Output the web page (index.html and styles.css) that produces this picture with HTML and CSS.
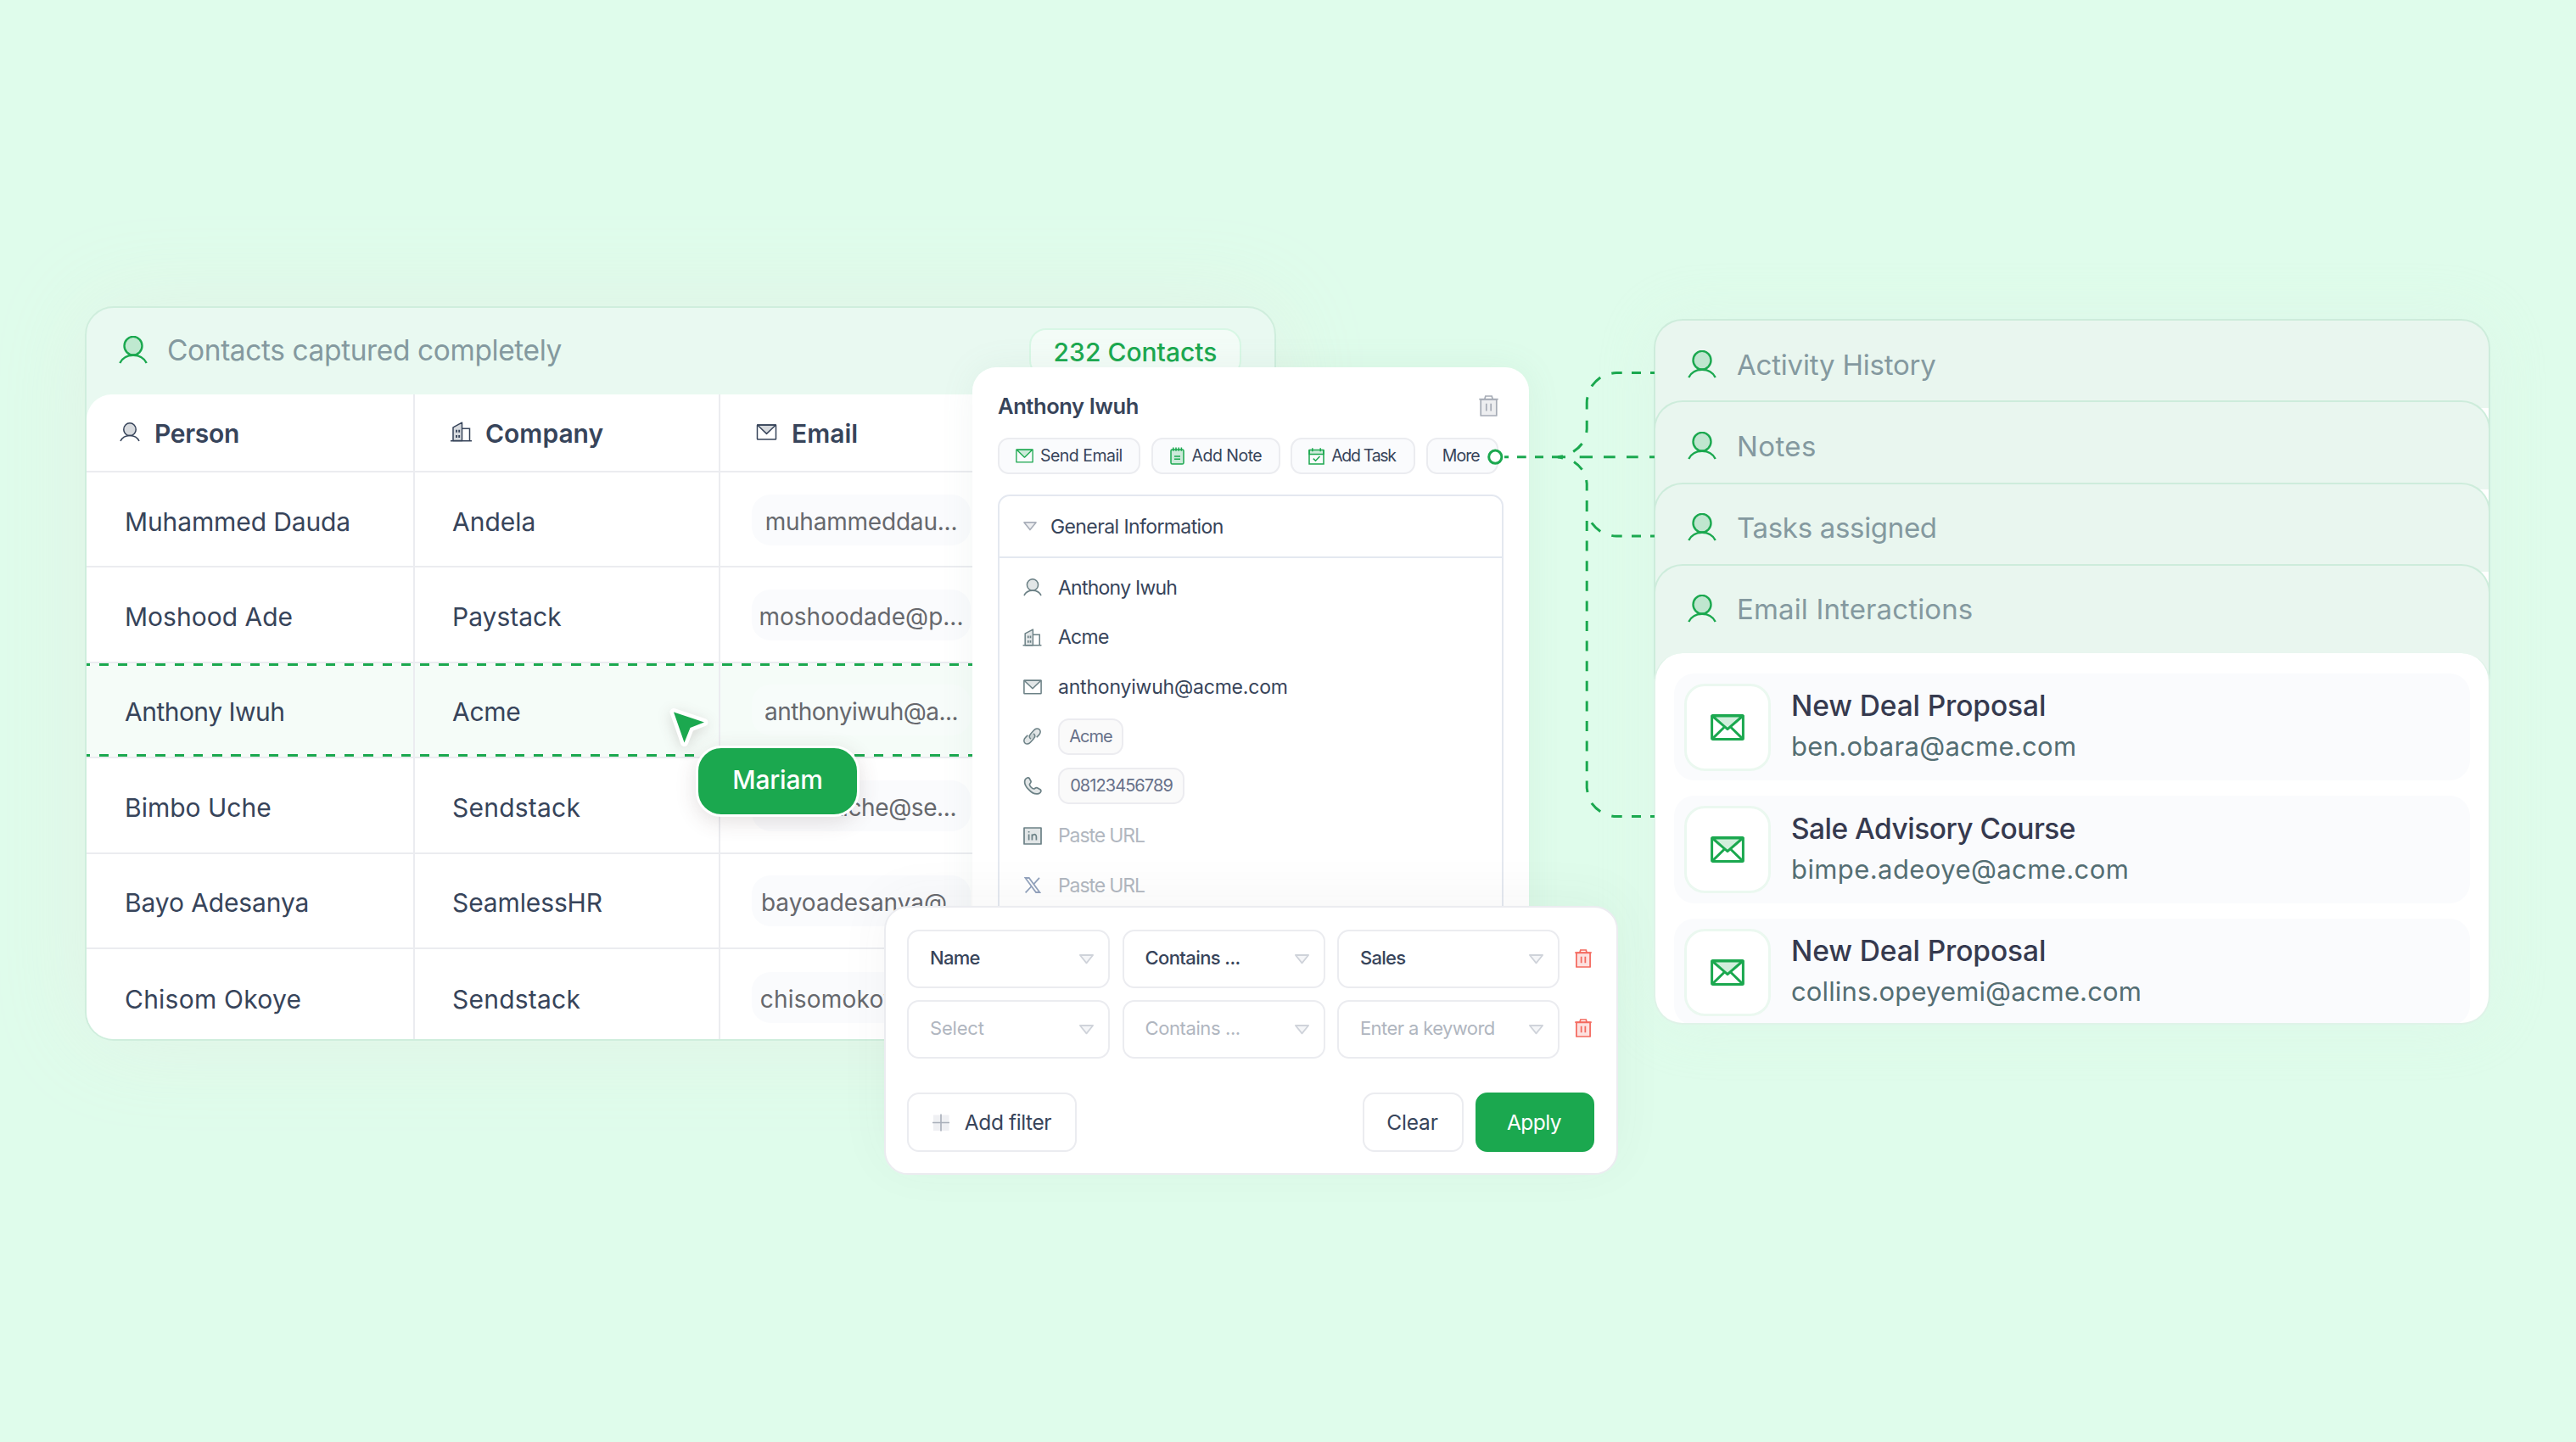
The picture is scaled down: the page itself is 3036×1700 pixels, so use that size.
FILE: index.html
```html
<!DOCTYPE html>
<html lang="en">
<head>
<meta charset="utf-8">
<title>Contacts</title>
<link rel="stylesheet" href="styles.css">
</head>
<body>
<svg class="defs" width="0" height="0" aria-hidden="true">
  <symbol id="person" viewBox="0 0 34 33">
    <ellipse class="tint" cx="17" cy="11.7" rx="10.5" ry="10.8"/>
    <path d="M1.3 32C7 19.6 27 19.6 32.7 32"/>
  </symbol>
  <symbol id="person-sm" viewBox="0 0 24 23">
    <ellipse class="tint" cx="12" cy="8.2" rx="7.2" ry="7.4"/>
    <path d="M1 22C5 13.3 19 13.3 23 22"/>
  </symbol>
  <symbol id="building" viewBox="0 0 26 24">
    <path class="tint" d="M3.5 22.5V6.8L14 1.2V22.5Z"/>
    <path d="M14 8.2H23V22.5M.5 22.7H25.5"/>
    <path d="M7.6 9.8v3M10.7 9.8v3M7.6 16v3M10.7 16v3" stroke-width="1.9"/>
  </symbol>
  <symbol id="mail" viewBox="0 0 24 19">
    <path class="tint" d="M1.2 1L12 11.4L22.8 1Z"/>
    <rect x="1" y="1" width="22" height="17" rx=".6"/>
  </symbol>
  <symbol id="mail-cross" viewBox="0 0 40 31">
    <path class="tint" d="M2 2L20 17.6L38 2Z"/>
    <rect x="1.6" y="1.6" width="36.8" height="27.8" rx="1"/>
    <path d="M2.5 28.6L16.2 15.2M37.5 28.6L23.8 15.2"/>
  </symbol>
  <symbol id="note" viewBox="0 0 17 21">
    <rect class="tint" x="1" y="3" width="15" height="17" rx="1.6"/>
    <path d="M3.8 .4v4.4M7 .4v4.4M10.2 .4v4.4M13.4 .4v4.4M5 11h7M5 14.2h7"/>
  </symbol>
  <symbol id="task" viewBox="0 0 19 20">
    <path class="tint" d="M1 2.6H18V7.4H1Z"/>
    <path d="M1 2.6V19H18V2.6M4.8 .3v4M14.2 .3v4M5.8 12.6l2.7 2.7l5-5.2"/>
  </symbol>
  <symbol id="trash" viewBox="0 0 23 25">
    <path class="tint" d="M2.2 5H20.8V24H2.2Z"/>
    <path d="M.3 4.6H22.7M6.8 4.4L7.8 1H15.2L16.2 4.4M8.8 9.8v8.6M14.2 9.8v8.6"/>
  </symbol>
  <symbol id="caret" viewBox="0 0 18 12">
    <path class="tint" d="M1.4 1H16.6L9 10.4Z"/>
  </symbol>
  <symbol id="link" viewBox="0 0 24 22">
    <path class="tint" d="M10.2 14.6C7.6 12.4 8 10 10.2 7.600L14.400 3C16.600 .6 19.600 .4 21.400 2.200C23.200 4 23 7 20.800 9.200L17.800 12.400"/>
    <path class="tint" d="M13.800 7.400C16.400 9.600 16 12 13.800 14.400L9.600 19C7.400 21.400 4.400 21.600 2.600 19.800C.8 18 1 15 3.200 12.800L6.200 9.600"/>
  </symbol>
  <symbol id="phone" viewBox="0 0 22 21">
    <path class="tint" d="M2.200 3.200C3.400 .8 6 .2 7.200 1.600L9 5C9.600 6.400 8 7.600 7.400 8.600C7.200 10.400 10.400 14 12.600 14C13.800 13.400 15 12 16.400 12.800L20 14.800C21.600 16 20.800 18.400 18.600 19.400C14.600 21 9.600 18.400 6 14.400C2.200 10.400 .8 6.400 2.200 3.200Z"/>
  </symbol>
  <symbol id="linkedin" viewBox="0 0 22 21">
    <rect class="tint" x="1" y="1" width="20" height="19"/>
    <path d="M6.600 8.600v7M6.600 5v1.600M10.400 8.600v7M10.400 11.600C10.400 8 15.400 7.600 15.400 11.400V15.600"/>
  </symbol>
  <symbol id="x" viewBox="0 0 20 19">
    <path d="M1.400 1H5.800L18.400 18H14Z"/>
    <path d="M18 .8L11 8.600M8.600 11L1.600 18.400"/>
  </symbol>
</svg>

<main class="stage">
  <section class="contacts">
    <header class="contacts-head">
      <svg class="ico green lg"><use href="#person"/></svg>
      <h2 class="k4">Contacts captured completely</h2>
      <span class="badge">232 Contacts</span>
    </header>
    <div class="table">
      <div class="row head">
        <div class="cell"><svg class="ico i-person"><use href="#person-sm"/></svg><span class="k3">Person</span></div>
        <div class="cell"><svg class="ico i-building"><use href="#building"/></svg><span>Company</span></div>
        <div class="cell"><svg class="ico i-mail"><use href="#mail"/></svg><span>Email</span></div>
      </div>
      <div class="row">
        <div class="cell"><span class="k1">Muhammed Dauda</span></div>
        <div class="cell"><span>Andela</span></div>
        <div class="cell"><span class="pill k2">muhammeddau...</span></div>
      </div>
      <div class="row">
        <div class="cell"><span>Moshood Ade</span></div>
        <div class="cell"><span>Paystack</span></div>
        <div class="cell"><span class="pill">moshoodade@p...</span></div>
      </div>
      <div class="row selected">
        <div class="cell"><span class="k5">Anthony Iwuh</span></div>
        <div class="cell"><span class="k3">Acme</span></div>
        <div class="cell"><span class="pill k5">anthonyiwuh@a...</span></div>
      </div>
      <div class="row">
        <div class="cell"><span>Bimbo Uche</span></div>
        <div class="cell"><span class="p2">Sendstack</span></div>
        <div class="cell"><span class="pill k4">bimbouche@se...</span></div>
      </div>
      <div class="row">
        <div class="cell"><span class="k1">Bayo Adesanya</span></div>
        <div class="cell"><span class="k1">SeamlessHR</span></div>
        <div class="cell"><span class="pill nudge">bayoadesanya@...</span></div>
      </div>
      <div class="row">
        <div class="cell"><span class="p2">Chisom Okoye</span></div>
        <div class="cell"><span class="p2">Sendstack</span></div>
        <div class="cell"><span class="pill p2 nudge">chisomokoye@s...</span></div>
      </div>
    </div>
  </section>

  <section class="activity">
    <div class="layer"><svg class="ico green lg"><use href="#person"/></svg><h2 class="k2">Activity History</h2></div>
    <div class="layer"><svg class="ico green lg"><use href="#person"/></svg><h2 class="p4">Notes</h2></div>
    <div class="layer"><svg class="ico green lg"><use href="#person"/></svg><h2 class="k3">Tasks assigned</h2></div>
    <div class="layer last"><svg class="ico green lg"><use href="#person"/></svg><h2 class="p1">Email Interactions</h2></div>
    <div class="mails">
      <article class="mail"><span class="tile"><svg class="ico green"><use href="#mail-cross"/></svg></span>
        <div><h3 class="k1">New Deal Proposal</h3><p class="p3">ben.obara@acme.com</p></div></article>
      <article class="mail"><span class="tile"><svg class="ico green"><use href="#mail-cross"/></svg></span>
        <div><h3 class="k5">Sale Advisory Course</h3><p class="p4">bimpe.adeoye@acme.com</p></div></article>
      <article class="mail"><span class="tile"><svg class="ico green"><use href="#mail-cross"/></svg></span>
        <div><h3 class="k1">New Deal Proposal</h3><p class="p1">collins.opeyemi@acme.com</p></div></article>
    </div>
  </section>

  <div class="cursor">
    <svg class="arrow" viewBox="0 0 56 56"><path d="M10 9.500L46 21.500L29.500 28L22.500 45.500Z"/></svg>
    <span class="tag k2">Mariam</span>
  </div>

  <section class="detail">
    <header class="detail-head"><h2 class="k4">Anthony Iwuh</h2><svg class="ico trash"><use href="#trash"/></svg></header>
    <div class="actions">
      <span class="act send"><svg class="ico green" width="21" height="17"><use href="#mail"/></svg><b class="k5">Send Email</b></span>
      <span class="act note"><svg class="ico green" width="17" height="21"><use href="#note"/></svg><b class="k5">Add Note</b></span>
      <span class="act task"><svg class="ico green" width="19" height="20"><use href="#task"/></svg><b class="k13">Add Task</b></span>
      <span class="act more"><b class="k9">More</b></span>
    </div>
    <div class="info">
      <div class="info-head"><svg class="ico caret"><use href="#caret"/></svg><span class="k6">General Information</span></div>
      <ul>
        <li><svg class="ico" width="22" height="21"><use href="#person-sm"/></svg><span class="k7">Anthony Iwuh</span></li>
        <li><svg class="ico" width="23" height="21"><use href="#building"/></svg><span class="k7">Acme</span></li>
        <li><svg class="ico" width="22" height="18"><use href="#mail"/></svg><span class="k2">anthonyiwuh@acme.com</span></li>
        <li><svg class="ico" width="23" height="20"><use href="#link"/></svg><span class="chip k9">Acme</span></li>
        <li><svg class="ico" width="22" height="21"><use href="#phone"/></svg><span class="chip phone k9">08123456789</span></li>
        <li><svg class="ico" width="22" height="21"><use href="#linkedin"/></svg><span class="ph k11">Paste URL</span></li>
        <li><svg class="ico blue" width="20" height="19"><use href="#x"/></svg><span class="ph k11">Paste URL</span></li>
      </ul>
    </div>
  </section>

  <section class="filter">
    <div class="frow">
      <span class="sel"><b class="k7">Name</b><svg class="ico caret"><use href="#caret"/></svg></span>
      <span class="sel"><b class="k6">Contains ...</b><svg class="ico caret"><use href="#caret"/></svg></span>
      <span class="sel"><b class="k7">Sales</b><svg class="ico caret"><use href="#caret"/></svg></span>
      <svg class="ico del"><use href="#trash"/></svg>
    </div>
    <div class="frow empty">
      <span class="sel"><b class="k2">Select</b><svg class="ico caret"><use href="#caret"/></svg></span>
      <span class="sel"><b class="k4">Contains ...</b><svg class="ico caret"><use href="#caret"/></svg></span>
      <span class="sel"><b class="k6">Enter a keyword</b><svg class="ico caret"><use href="#caret"/></svg></span>
      <svg class="ico del"><use href="#trash"/></svg>
    </div>
    <footer>
      <span class="btn add"><svg width="20" height="21" viewBox="0 0 20 21"><rect x="1" y="1.500" width="18.500" height="18.500" fill="#eff0f3"/><path d="M10 .5V20.500M0 10.500H20" stroke="#a9afba" stroke-width="1.600"/></svg><b class="k4">Add filter</b></span>
      <span class="btn clear"><b class="k1">Clear</b></span>
      <span class="btn apply"><b class="k5">Apply</b></span>
    </footer>
  </section>

  <svg class="wires" viewBox="1740 420 220 560">
    <path d="M1773 538.700H1778M1788 538.700H1798.700M1809 538.700H1819M1829 538.700H1845M1861.700 538.700H1877M1890 538.700H1903.700M1917 538.700H1930.700M1944 538.700H1950"/>
    <path d="M1945 439.600H1950M1923 439.600H1934M1911.700 439.600H1905Q1902 439.600 1899.300 440.200M1886.200 445Q1880.500 449 1875.800 455.300M1871 468.300Q1870.200 471 1870.200 475V482.500M1870.200 495.700V506L1869.800 510M1864.600 523Q1860.500 528.500 1854.200 532.600M1842 537.700L1836 538.700"/>
    <path d="M1945 632H1950M1923 632H1934M1911.700 632H1905Q1902 632 1899.300 631.400M1886.200 626.400Q1880.500 622.500 1875.800 616.300M1855 544.500Q1860.500 548 1864.600 553.700M1836 538.700L1842 540"/>
    <path d="M1869.600 566L1870.200 570V578.600M1870.200 590V603M1870.200 920.500V929L1871 934"/>
    <path d="M1870.200 614V915" class="long"/>
    <path d="M1945 962.600H1950M1923 962.600H1934M1911.700 962.600H1905Q1902 962.600 1899.300 962M1886.200 956.800Q1880.500 953 1875.800 946.800"/>
    <circle cx="1762.300" cy="538.700" r="7.600"/>
  </svg>
</main>
</body>
</html>
```
FILE: styles.css
```css
* { box-sizing: border-box; }
body {
  margin: 0;
  background: #dffceb;
  font-family: Inter, "Liberation Sans", sans-serif;
  color: #37445a;
}
h2, h3, p, ul { margin: 0; padding: 0; font-weight: 400; }
b { font-weight: inherit; }
.defs { position: absolute; }

/* letter-spacing steps */
.k1 { letter-spacing: -.12px; } .k2 { letter-spacing: -.2px; } .k3 { letter-spacing: -.32px; }
.k4 { letter-spacing: -.4px; } .k5 { letter-spacing: -.52px; } .k6 { letter-spacing: -.6px; }
.k7 { letter-spacing: -.75px; } .k9 { letter-spacing: -.93px; } .k11 { letter-spacing: -1.1px; }
.k13 { letter-spacing: -1.3px; }
.p1 { letter-spacing: .14px; } .p2 { letter-spacing: .23px; } .p3 { letter-spacing: .28px; } .p4 { letter-spacing: .41px; }

.ico { fill: none; stroke: currentColor; stroke-width: 1.5; flex: none; overflow: visible; }
.tint { fill: currentColor; fill-opacity: .2; stroke-linejoin: round; }
.green { color: #1ba84f; }
.lg { width: 34px; height: 33px; stroke-width: 2.4; }

.stage {
  position: relative;
  width: 3036px;
  height: 1700px;
  overflow: hidden;
  display: flex;
  align-items: flex-start;
  justify-content: space-between;
  padding: 361px 101px 0 100px;
}

/* contacts table */
.contacts {
  width: 1404px;
  height: 866px;
  border: 2px solid #cfeedd;
  border-radius: 34px;
  background: #e9f9f1;
  box-shadow: 0 0 110px rgba(240, 205, 215, .2);
  overflow: hidden;
}
.contacts-head { height: 102px; display: flex; align-items: center; padding: 0 39px 4px 38px; }
.contacts-head h2 { font-size: 33.5px; color: #84999f; margin-left: 23px; padding-top: 1px; }
.badge {
  margin: 24px 0 0 auto;
  align-self: flex-start;
  height: 58px;
  width: 250px;
  border: 2px solid #d8f7e5;
  border-radius: 20px;
  background: #f3fcf7;
  color: #1ba84f;
  font-size: 30px;
  font-weight: 500;
  line-height: 53px;
  text-align: center;
}
.table {
  display: grid;
  grid-template-rows: 92px repeat(6, 112.4px);
  background: #fff;
  border-radius: 30px 30px 0 0;
  overflow: hidden;
}
.row { display: grid; grid-template-columns: 387px 360px 1fr; border-bottom: 2px solid #ebecf0; position: relative; }
.row:last-child { border-bottom: 0; }
.cell { display: flex; align-items: center; padding: 5px 0 0 44px; font-size: 30px; border-right: 2px solid #ebecf0; }
.cell:nth-child(3) { border-right: 0; padding: 1px 0 0 37px; }
.cell:first-child { padding-left: 45px; }
.head .cell, .head .cell:nth-child(3) { font-weight: 600; padding: 1px 0 0 41px; }
.head .cell:first-child { padding-left: 39px; }
.i-person { width: 24px; height: 23px; margin-right: 17px; margin-top: -3px; }
.i-building { width: 27px; height: 24px; margin-right: 15px; margin-top: -3px; }
.head .cell .i-mail { width: 25px; height: 19px; margin: -3px 17px 0 1px; }
.pill {
  width: 258px;
  height: 60px;
  padding-top: 3px;
  line-height: 58px;
  text-align: center;
  border-radius: 22px;
  background: #fafbfd;
  color: #66686d;
  font-size: 28px;
}
.pill.nudge { padding-left: 6px; white-space: nowrap; }
.selected { background: #f5fcf8; }
.selected .pill { background: #f7fcfa; }
.selected::before, .selected::after {
  content: "";
  position: absolute;
  left: 0;
  right: 0;
  height: 3px;
  background: repeating-linear-gradient(90deg, #1ba84f 0 11.300px, transparent 11.300px 22.270px) -7.700px 0 / 1500px 3px repeat-x;
}
.selected::before { top: 0; }
.selected::after { bottom: 0; }

/* stacked activity panel */
.activity { width: 986px; margin-top: 15px; border-radius: 34px; box-shadow: 0 0 70px rgba(220, 240, 230, .3); }
.layer {
  height: 136px;
  margin-bottom: -39.700px;
  display: flex;
  align-items: flex-start;
  padding: 34.500px 38px 0;
  border: 2px solid #cdecdb;
  border-bottom: 0;
  border-radius: 34px 34px 0 0;
  background: linear-gradient(#fff, #fff) right bottom / 12px 31px no-repeat, #e9f6ef;
  position: relative;
}
.layer.last { background: #e9f6ef; margin-bottom: -31px; }
.layer h2 { font-size: 33px; line-height: 38px; color: #84999f; margin: -2px 0 0 24px; }
.mails {
  position: relative;
  height: 438px;
  border: solid #dff3e8;
  border-width: 0 2px 2px;
  border-radius: 34px;
  background: #fff;
  overflow: hidden;
  padding: 24px 22px 0;
  display: flex;
  flex-direction: column;
  gap: 18px;
}
.mail { flex: none; height: 126.500px; display: flex; align-items: center; gap: 24px; padding: 0 12px; border-radius: 24px; background: #fafbfd; }
.tile { width: 102px; height: 103px; border: 3px solid #ebf8f0; border-radius: 24px; background: #fff; display: grid; place-items: center; }
.tile svg { width: 40px; height: 31px; stroke-width: 3; }
.mail h3 { font-size: 33.5px; font-weight: 500; color: #363a4f; line-height: 48px; }
.mail p { font-size: 31px; color: #546e73; line-height: 48px; }
.mail div { padding-bottom: 2px; }

/* collaborator cursor */
.cursor { position: absolute; left: 784px; top: 830px; }
.arrow { display: block; width: 56px; height: 56px; overflow: visible; filter: drop-shadow(0 4px 8px rgba(60, 40, 40, .16)); }
.arrow path { fill: #1ba84f; stroke: #fff; stroke-width: 9; stroke-linejoin: round; paint-order: stroke; }
.tag {
  position: absolute;
  left: 36px;
  top: 49px;
  width: 193px;
  height: 84px;
  border: 3.500px solid #fff;
  border-radius: 30px;
  background: #1ba84f;
  color: #fff;
  font-size: 30px;
  font-weight: 500;
  line-height: 75px;
  text-align: center;
  box-shadow: 0 6px 24px rgba(90, 60, 60, .16);
}

/* contact detail */
.detail {
  position: absolute;
  left: 1146px;
  top: 433px;
  width: 656px;
  height: 700px;
  padding: 0 30px;
  border-radius: 28px;
  background: #fff;
  box-shadow: 0 0 40px rgba(120, 150, 140, .09);
}
.detail-head { height: 83px; display: flex; align-items: center; justify-content: space-between; padding: 7px 6px 0 0; }
.detail-head h2 { font-size: 25.5px; font-weight: 600; }
.trash { width: 23px; height: 25px; color: #a6acb6; stroke-width: 1.700; }
.actions { display: flex; gap: 12.600px; }
.act {
  height: 43px;
  border: 2px solid #ebecf0;
  border-radius: 13px;
  background: #fafbfd;
  font-size: 19.5px;
  display: flex;
  align-items: center;
  justify-content: flex-start;
  padding-left: 19px;
  flex: none;
}
.act b { margin-left: 8px; margin-top: -1px; }
.send { width: 168px; } .note { width: 152px; padding-left: 20px; } .task { width: 147px; padding-left: 19px; }
.note b { margin-left: 9px; }
.more { width: 85px; padding-left: 9px; }
.info { margin-top: 24px; height: 530px; border: 2px solid #e4e8f0; border-radius: 14px 14px 0 0; }
.info-head { height: 73px; display: flex; align-items: center; padding-left: 27px; border-bottom: 2px solid #e4e8f0; font-size: 23px; }
.caret { width: 18px; height: 11px; color: #a9afba; stroke-width: 1.800; }
.info-head .caret { margin-right: 15px; }
.info ul { list-style: none; padding: 5.500px 0 0 27px; }
.info li { height: 58.500px; display: grid; grid-template-columns: 23px auto; justify-content: start; justify-items: center; align-items: center; column-gap: 19px; font-size: 23px; color: #37445a; }
.info li .ico { color: #6c8186; stroke-width: 1.700; }
.info li .ico.blue { color: #93a3bd; stroke-width: 1.800; }
.info .ph { color: #b1b7c0; }
.chip { height: 43px; width: 77px; border: 2px solid #ececf0; border-radius: 13px; background: #fafafa; color: #667089; font-size: 20px; line-height: 38px; text-align: center; }
.chip.phone { width: 149px; }

/* filter popover */
.filter {
  position: absolute;
  left: 1042px;
  top: 1068px;
  width: 865px;
  height: 317px;
  padding: 26px 25px 0;
  border: 2px solid #ebecf0;
  border-radius: 28px;
  background: #fff;
  box-shadow: 0 -10px 60px rgba(80, 80, 80, .05);
}
.frow { display: grid; grid-template-columns: 239px 239px 262px 21px; column-gap: 14.500px; align-items: center; height: 69px; margin-bottom: 13.700px; font-size: 22px; font-weight: 500; }
.sel { height: 69px; border: 2px solid #ebecf0; border-radius: 14px; display: flex; align-items: center; justify-content: space-between; padding: 0 16px 3px 25px; }
.sel .caret { color: #cfd3da; margin-top: 4px; width: 19px; height: 12px; }
.empty { color: #b0b6c0; font-weight: 400; margin-bottom: 40px; }
.del { width: 20px; height: 22px; color: #f4695f; stroke-width: 2; margin: -2px 0 0 3px; }
footer { display: flex; }
.btn { height: 70px; border: 2px solid #ebecf0; border-radius: 14px; font-size: 24.5px; display: flex; align-items: center; justify-content: center; padding-top: 1px; }
.add { width: 200px; gap: 18px; }
.clear { width: 119px; margin-left: auto; padding-right: 2px; }
.apply { width: 140px; margin: 0 1px 0 14px; border-color: #1ba84f; background: #1ba84f; color: #fff; padding-right: 2px; }

/* dashed connectors */
.wires { position: absolute; left: 1740px; top: 420px; width: 220px; height: 560px; fill: none; stroke: #1ba84f; stroke-width: 3; }
.wires .long { stroke-dasharray: 12 11.600; }
.wires circle { fill: #fff; stroke-width: 3; }
```
